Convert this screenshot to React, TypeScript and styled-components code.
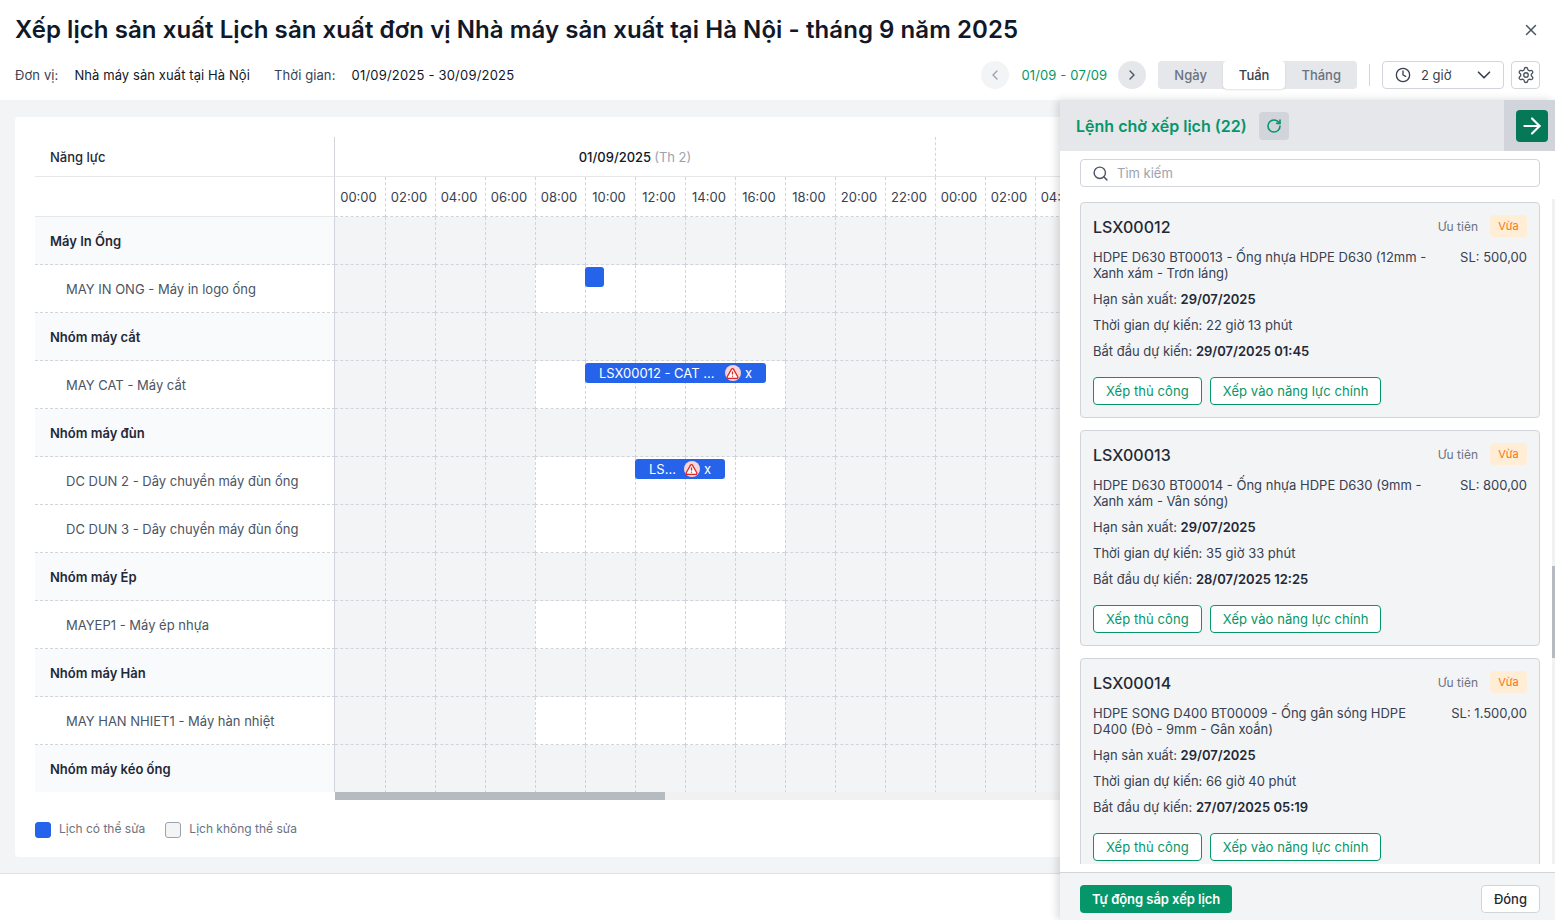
import * as React from 'react';
import styled, { createGlobalStyle } from 'styled-components';
import {
  ArrowRight,
  ChevronDown,
  ChevronLeft,
  ChevronRight,
  Clock,
  RotateCw,
  Search,
  Settings,
  TriangleAlert,
  X,
} from 'lucide-react';

type RowData = {
  label: string;
  group?: boolean;
  event?: { left: number; width: number; text?: string };
};

type OrderData = {
  code: string;
  desc: string;
  qty: string;
  deadline: string;
  duration: string;
  start: string;
};

// the drawer covers everything after the 15th column
const HOURS = ['00:00', '02:00', '04:00', '06:00', '08:00', '10:00', '12:00', '14:00', '16:00', '18:00', '20:00', '22:00', '00:00', '02:00', '04:00'];

const ROWS: RowData[] = [
  { label: 'Máy In Ống', group: true },
  { label: 'MAY IN ONG - Máy in logo ống', event: { left: 250, width: 19 } },
  { label: 'Nhóm máy cắt', group: true },
  { label: 'MAY CAT - Máy cắt', event: { left: 250, width: 181, text: 'LSX00012 - CAT ...' } },
  { label: 'Nhóm máy đùn', group: true },
  { label: 'DC DUN 2 - Dây chuyền máy đùn ống', event: { left: 300, width: 90, text: 'LS...' } },
  { label: 'DC DUN 3 - Dây chuyền máy đùn ống' },
  { label: 'Nhóm máy Ép', group: true },
  { label: 'MAYEP1 - Máy ép nhựa' },
  { label: 'Nhóm máy Hàn', group: true },
  { label: 'MAY HAN NHIET1 - Máy hàn nhiệt' },
  { label: 'Nhóm máy kéo ống', group: true },
];

const ORDERS: OrderData[] = [
  {
    code: 'LSX00012',
    desc: 'HDPE D630 BT00013 - Ống nhựa HDPE D630 (12mm - Xanh xám - Trơn láng)',
    qty: 'SL: 500,00',
    deadline: '29/07/2025',
    duration: '22 giờ 13 phút',
    start: '29/07/2025 01:45',
  },
  {
    code: 'LSX00013',
    desc: 'HDPE D630 BT00014 - Ống nhựa HDPE D630 (9mm - Xanh xám - Vân sóng)',
    qty: 'SL: 800,00',
    deadline: '29/07/2025',
    duration: '35 giờ 33 phút',
    start: '28/07/2025 12:25',
  },
  {
    code: 'LSX00014',
    desc: 'HDPE SONG D400 BT00009 - Ống gân sóng HDPE D400 (Đỏ - 9mm - Gân xoắn)',
    qty: 'SL: 1.500,00',
    deadline: '29/07/2025',
    duration: '66 giờ 40 phút',
    start: '27/07/2025 05:19',
  },
];

const GlobalStyle = createGlobalStyle`
  html, body {
    margin: 0;
    padding: 0;
    background: #fff;
  }
  * {
    box-sizing: border-box;
  }
  body {
    font-family: Inter, "Noto Sans", sans-serif;
    color: #111827;
  }
`;

const Page = styled.div`
  display: flex;
  flex-direction: column;
  height: 920px;
  overflow: hidden;
  position: relative;
  width: 1555px;
`;

const Header = styled.header`
  flex: 0 0 100px;
  padding: 0 15px;
`;

const TitleRow = styled.div`
  align-items: center;
  display: flex;
  height: 61px;
  justify-content: space-between;
`;

const Title = styled.h1`
  color: #111827;
  font-size: 24px;
  font-weight: 600;
  letter-spacing: 0.07px;
  line-height: 32px;
  margin: 0;
  padding-bottom: 2px;
`;

const CloseButton = styled.span`
  color: #4b5563;
  display: flex;
  padding-bottom: 2px;
`;

const MetaRow = styled.div`
  align-items: center;
  display: flex;
  height: 28px;
  justify-content: space-between;
`;

const Meta = styled.div`
  align-items: center;
  display: flex;
  font-size: 13px;
`;

const MetaLabel = styled.span`
  color: #374151;
  letter-spacing: 0.1px;
  margin-right: 16px;
`;

const MetaValue = styled.span<{ $numeric?: boolean }>`
  color: #111827;
  letter-spacing: ${props => (props.$numeric ? '0.2px' : '0.09px')};
  margin-right: 24px;
`;

const Controls = styled.div`
  align-items: center;
  display: flex;
`;

const RoundButton = styled.span<{ $muted?: boolean }>`
  align-items: center;
  background: ${props => (props.$muted ? '#f3f4f6' : '#e5e7eb')};
  border-radius: 50%;
  color: ${props => (props.$muted ? '#9ca3af' : '#4b5563')};
  display: flex;
  height: 28px;
  justify-content: center;
  width: 28px;
`;

const RangeText = styled.span`
  color: #059669;
  font-size: 13px;
  letter-spacing: 0.15px;
  margin: 0 11px 0 12px;
`;

const Segments = styled.div`
  background: #e5e7eb;
  border-radius: 4px;
  display: flex;
  height: 28px;
  margin-left: 12px;
`;

const Segment = styled.span<{ $active?: boolean }>`
  align-items: center;
  background: ${props => (props.$active ? '#fff' : 'transparent')};
  border-radius: 4px;
  box-shadow: ${props => (props.$active ? '0 1px 2px rgba(0, 0, 0, 0.12)' : 'none')};
  color: ${props => (props.$active ? '#374151' : '#6b7280')};
  display: flex;
  font-size: 13px;
  font-weight: 500;
  padding: 0 16px;
`;

const Divider = styled.span`
  background: #d1d5db;
  height: 22px;
  margin: 0 12px;
  width: 1px;
`;

const SelectBox = styled.div`
  align-items: center;
  background: #fff;
  border: 1px solid #d1d5db;
  border-radius: 4px;
  color: #374151;
  display: flex;
  font-size: 13px;
  gap: 10px;
  height: 28px;
  padding: 0 8px 0 12px;
  width: 122px;
`;

const SelectText = styled.span`
  flex: 1;
`;

const GearButton = styled.span`
  align-items: center;
  background: #fff;
  border: 1px solid #d1d5db;
  border-radius: 4px;
  color: #4b5563;
  display: flex;
  height: 28px;
  justify-content: center;
  margin-left: 7px;
  width: 29px;
`;

const Body = styled.main`
  background: #f3f4f6;
  border-bottom: 1px solid #dde1e4;
  flex: 0 0 774px;
  padding: 17px 15px 16px;
`;

const Card = styled.section`
  background: #fff;
  border-radius: 4px;
  height: 740px;
  padding: 20px 20px 0;
`;

const Schedule = styled.div`
  height: 655px;
  overflow: hidden;
`;

const GridRow = styled.div`
  display: flex;
`;

const LeftCell = styled.div<{ $group?: boolean; $sub?: boolean; $bold?: boolean; $plain?: boolean }>`
  align-items: center;
  background: ${props => (props.$group ? '#f9fafb' : '#fff')};
  border-bottom: ${props => (props.$plain ? '1px solid #e5e7eb' : '1px dashed #d1d5db')};
  border-right: 1px solid #d1d5db;
  color: ${props => (props.$bold ? '#1f2937' : '#4b5563')};
  display: flex;
  flex: 0 0 300px;
  font-size: 13px;
  font-weight: ${props => (props.$bold ? 600 : 400)};
  height: ${props => (props.$plain ? '40px' : '48px')};
  padding-left: ${props => (props.$sub ? '31px' : '15px')};
`;

const HeadLabel = styled.span`
  color: #1f2937;
  font-weight: 500;
`;

const DateCell = styled.div<{ $first?: boolean }>`
  align-items: center;
  border-bottom: 1px solid #e5e7eb;
  border-left: ${props => (props.$first ? 'none' : '1px dashed #d1d5db')};
  display: flex;
  flex: 0 0 ${props => (props.$first ? '600px' : '150px')};
  font-size: 13px;
  font-weight: 500;
  gap: 3px;
  height: 40px;
  justify-content: center;
`;

const DateHint = styled.span`
  color: #9ca3af;
  font-weight: 400;
`;

const HourCell = styled.div<{ $first?: boolean }>`
  align-items: center;
  border-bottom: 1px dashed #d1d5db;
  border-left: ${props => (props.$first ? 'none' : '1px dashed #d1d5db')};
  color: #374151;
  display: flex;
  flex: 0 0 50px;
  font-size: 13px;
  height: 40px;
  justify-content: center;
  padding-right: 3px;
  white-space: nowrap;
`;

const Timeline = styled.div`
  display: flex;
  position: relative;
`;

const SlotCell = styled.div<{ $first?: boolean; $open?: boolean }>`
  background: ${props => (props.$open ? '#fff' : '#f3f4f6')};
  border-bottom: 1px dashed #d1d5db;
  border-left: ${props => (props.$first ? 'none' : '1px dashed #d1d5db')};
  flex: 0 0 50px;
  height: 48px;
`;

const EventBar = styled.div<{ $left: number; $width: number }>`
  align-items: center;
  background: #2563eb;
  border-radius: 3px;
  color: #fff;
  display: flex;
  font-size: 13px;
  gap: 4px;
  height: 20px;
  left: ${props => props.$left}px;
  padding: 0 ${props => (props.$width < 30 ? 0 : 14)}px;
  position: absolute;
  top: 2px;
  width: ${props => props.$width}px;
`;

const EventText = styled.span`
  flex: 1;
  white-space: nowrap;
`;

const AlertDot = styled.span`
  align-items: center;
  background: #fad4d4;
  border-radius: 50%;
  color: #dc2626;
  display: flex;
  flex: 0 0 16px;
  height: 16px;
  justify-content: center;
`;

const HScroll = styled.div`
  background: #f1f1f1;
  height: 8px;
  margin-left: 300px;
`;

const HThumb = styled.div`
  background: #b6bac1;
  height: 8px;
  width: 330px;
`;

const Legend = styled.div`
  align-items: center;
  display: flex;
  margin-top: 21px;
`;

const Swatch = styled.span<{ $filled?: boolean }>`
  background: ${props => (props.$filled ? '#2563eb' : '#f3f4f6')};
  border: 1px solid ${props => (props.$filled ? '#2563eb' : '#9ca3af')};
  border-radius: 3px;
  height: 16px;
  width: 16px;
`;

const LegendText = styled.span`
  color: #6b7280;
  font-size: 12px;
  margin: 0 20px 0 8px;
  padding-bottom: 2px;
`;

const PageFooter = styled.footer`
  flex: 1;
`;

const Drawer = styled.aside`
  background: #fff;
  bottom: 0;
  box-shadow: -3px 0 8px rgba(0, 0, 0, 0.14);
  display: flex;
  flex-direction: column;
  position: absolute;
  right: 0;
  top: 100px;
  width: 495px;
`;

const DrawerHead = styled.div`
  align-items: center;
  background: #e5e7eb;
  display: flex;
  flex: 0 0 51px;
  padding-left: 16px;
`;

const DrawerTitle = styled.h2`
  color: #059669;
  flex: 0 0 auto;
  font-size: 16px;
  font-weight: 600;
  margin: 0;
`;

const RefreshButton = styled.span`
  align-items: center;
  background: #d1d5db;
  border-radius: 4px;
  color: #059669;
  display: flex;
  height: 28px;
  justify-content: center;
  margin-left: 12px;
  width: 30px;
`;

const CollapseWrap = styled.div`
  align-items: center;
  align-self: stretch;
  background: #d1d5db;
  display: flex;
  margin-left: auto;
  padding: 0 7px 0 12px;
`;

const CollapseButton = styled.span`
  align-items: center;
  background: #047857;
  border-radius: 4px;
  color: #fff;
  display: flex;
  height: 32px;
  justify-content: center;
  width: 32px;
`;

const SearchWrap = styled.div`
  flex: 0 0 44px;
  padding: 8px 15px 8px 20px;
`;

const SearchBox = styled.div`
  align-items: center;
  border: 1px solid #d1d5db;
  border-radius: 4px;
  color: #4b5563;
  display: flex;
  gap: 8px;
  height: 28px;
  padding-left: 11px;
`;

const Placeholder = styled.span`
  color: #9ca3af;
  font-size: 13px;
`;

const OrderList = styled.div`
  display: flex;
  flex: 0 0 669px;
  flex-direction: column;
  gap: 12px;
  overflow: hidden;
  padding: 7px 15px 0 20px;
  position: relative;
`;

const VScroll = styled.div`
  background: #f1f1f1;
  bottom: 0;
  position: absolute;
  right: 0;
  top: 4px;
  width: 3px;
`;

const VThumb = styled.div`
  background: #b6bac1;
  height: 92px;
  margin-top: 367px;
  width: 3px;
`;

const OrderCard = styled.article`
  background: #f3f4f6;
  border: 1px solid #d1d5db;
  border-radius: 4px;
  flex: 0 0 216px;
  padding: 12px;
`;

const OrderHead = styled.div`
  align-items: center;
  display: flex;
  height: 22px;
`;

const OrderCode = styled.span`
  color: #1f2937;
  flex: 1;
  font-size: 16px;
  font-weight: 500;
  letter-spacing: 0.03px;
  padding-top: 2px;
`;

const PriorityLabel = styled.span`
  color: #6b7280;
  font-size: 12px;
  margin-right: 12px;
`;

const PriorityBadge = styled.span`
  align-items: center;
  background: #ffedd5;
  border-radius: 4px;
  color: #f97316;
  display: flex;
  font-size: 11px;
  height: 22px;
  justify-content: center;
  width: 37px;
`;

const DescRow = styled.div`
  color: #374151;
  display: flex;
  font-size: 13px;
  gap: 16px;
  line-height: 16px;
  margin-top: 12px;
`;

const DescText = styled.span`
  flex: 1;
`;

const QtyText = styled.span`
  flex: 0 0 auto;
`;

const InfoLine = styled.div`
  color: #374151;
  font-size: 13px;
  line-height: 16px;
  margin-top: 10px;
`;

const Strong = styled.b`
  color: #1f2937;
  font-weight: 600;
`;

const Actions = styled.div`
  display: flex;
  gap: 8px;
  margin-top: 18px;
`;

const OutlineButton = styled.span`
  align-items: center;
  background: #fff;
  border: 1px solid #059669;
  border-radius: 4px;
  color: #059669;
  display: flex;
  font-size: 13px;
  height: 28px;
  letter-spacing: 0.08px;
  padding: 0 12px;
`;

const DrawerFoot = styled.div`
  align-items: center;
  background: #f3f4f6;
  border-top: 1px solid #d1d5db;
  display: flex;
  flex: 1;
  justify-content: space-between;
  margin-top: 8px;
  padding: 4px 15px 0 20px;
`;

const PrimaryButton = styled.span`
  align-items: center;
  background: #059669;
  border-radius: 4px;
  color: #fff;
  display: flex;
  font-size: 13px;
  font-weight: 600;
  height: 28px;
  letter-spacing: -0.05px;
  padding: 0 12px;
`;

const CloseTextButton = styled.span`
  align-items: center;
  background: #fff;
  border: 1px solid #d1d5db;
  border-radius: 4px;
  color: #1f2937;
  display: flex;
  font-size: 13px;
  font-weight: 500;
  height: 28px;
  padding: 0 12px;
`;

const ScheduleRow = ({ row }: { row: RowData }) => (
  <GridRow>
    <LeftCell $group={row.group} $sub={!row.group} $bold={row.group}>
      {row.label}
    </LeftCell>
    <Timeline>
      {HOURS.map((_, i) => (
        <SlotCell key={i} $first={i === 0} $open={!row.group && i >= 4 && i < 9} />
      ))}
      {row.event && (
        <EventBar $left={row.event.left} $width={row.event.width}>
          {row.event.text && (
            <>
              <EventText>{row.event.text}</EventText>
              <AlertDot>
                <TriangleAlert size={13} strokeWidth={2.4} fill="#fff" />
              </AlertDot>
              x
            </>
          )}
        </EventBar>
      )}
    </Timeline>
  </GridRow>
);

const OrderItem = ({ order }: { order: OrderData }) => (
  <OrderCard>
    <OrderHead>
      <OrderCode>{order.code}</OrderCode>
      <PriorityLabel>Ưu tiên</PriorityLabel>
      <PriorityBadge>Vừa</PriorityBadge>
    </OrderHead>
    <DescRow>
      <DescText>{order.desc}</DescText>
      <QtyText>{order.qty}</QtyText>
    </DescRow>
    <InfoLine>
      Hạn sản xuất: <Strong>{order.deadline}</Strong>
    </InfoLine>
    <InfoLine>Thời gian dự kiến: {order.duration}</InfoLine>
    <InfoLine>
      Bắt đầu dự kiến: <Strong>{order.start}</Strong>
    </InfoLine>
    <Actions>
      <OutlineButton>Xếp thủ công</OutlineButton>
      <OutlineButton>Xếp vào năng lực chính</OutlineButton>
    </Actions>
  </OrderCard>
);

const App = () => {
  return (
    <Page>
      <GlobalStyle />
      <Header>
        <TitleRow>
          <Title>Xếp lịch sản xuất Lịch sản xuất đơn vị Nhà máy sản xuất tại Hà Nội - tháng 9 năm 2025</Title>
          <CloseButton>
            <X size={18} />
          </CloseButton>
        </TitleRow>
        <MetaRow>
          <Meta>
            <MetaLabel>Đơn vị:</MetaLabel>
            <MetaValue>Nhà máy sản xuất tại Hà Nội</MetaValue>
            <MetaLabel>Thời gian:</MetaLabel>
            <MetaValue $numeric>01/09/2025 - 30/09/2025</MetaValue>
          </Meta>
          <Controls>
            <RoundButton $muted>
              <ChevronLeft size={16} />
            </RoundButton>
            <RangeText>01/09 - 07/09</RangeText>
            <RoundButton>
              <ChevronRight size={16} />
            </RoundButton>
            <Segments>
              <Segment>Ngày</Segment>
              <Segment $active>Tuần</Segment>
              <Segment>Tháng</Segment>
            </Segments>
            <Divider />
            <SelectBox>
              <Clock size={16} />
              <SelectText>2 giờ</SelectText>
              <ChevronDown size={22} strokeWidth={1.8} />
            </SelectBox>
            <GearButton>
              <Settings size={18} strokeWidth={1.8} />
            </GearButton>
          </Controls>
        </MetaRow>
      </Header>

      <Body>
        <Card>
          <Schedule>
            <GridRow>
              <LeftCell $plain>
                <HeadLabel>Năng lực</HeadLabel>
              </LeftCell>
              <DateCell $first>
                01/09/2025 <DateHint>(Th 2)</DateHint>
              </DateCell>
              <DateCell />
            </GridRow>
            <GridRow>
              <LeftCell $plain />
              {HOURS.map((hour, i) => (
                <HourCell key={i} $first={i === 0}>
                  {hour}
                </HourCell>
              ))}
            </GridRow>
            {ROWS.map(row => (
              <ScheduleRow key={row.label} row={row} />
            ))}
          </Schedule>
          <HScroll>
            <HThumb />
          </HScroll>
          <Legend>
            <Swatch $filled />
            <LegendText>Lịch có thể sửa</LegendText>
            <Swatch />
            <LegendText>Lịch không thể sửa</LegendText>
          </Legend>
        </Card>
      </Body>
      <PageFooter />

      <Drawer>
        <DrawerHead>
          <DrawerTitle>Lệnh chờ xếp lịch (22)</DrawerTitle>
          <RefreshButton>
            <RotateCw size={16} strokeWidth={2.4} />
          </RefreshButton>
          <CollapseWrap>
            <CollapseButton>
              <ArrowRight size={26} />
            </CollapseButton>
          </CollapseWrap>
        </DrawerHead>
        <SearchWrap>
          <SearchBox>
            <Search size={17} />
            <Placeholder>Tìm kiếm</Placeholder>
          </SearchBox>
        </SearchWrap>
        <OrderList>
          {ORDERS.map(order => (
            <OrderItem key={order.code} order={order} />
          ))}
          <VScroll>
            <VThumb />
          </VScroll>
        </OrderList>
        <DrawerFoot>
          <PrimaryButton>Tự động sắp xếp lịch</PrimaryButton>
          <CloseTextButton>Đóng</CloseTextButton>
        </DrawerFoot>
      </Drawer>
    </Page>
  );
};

export default App;
